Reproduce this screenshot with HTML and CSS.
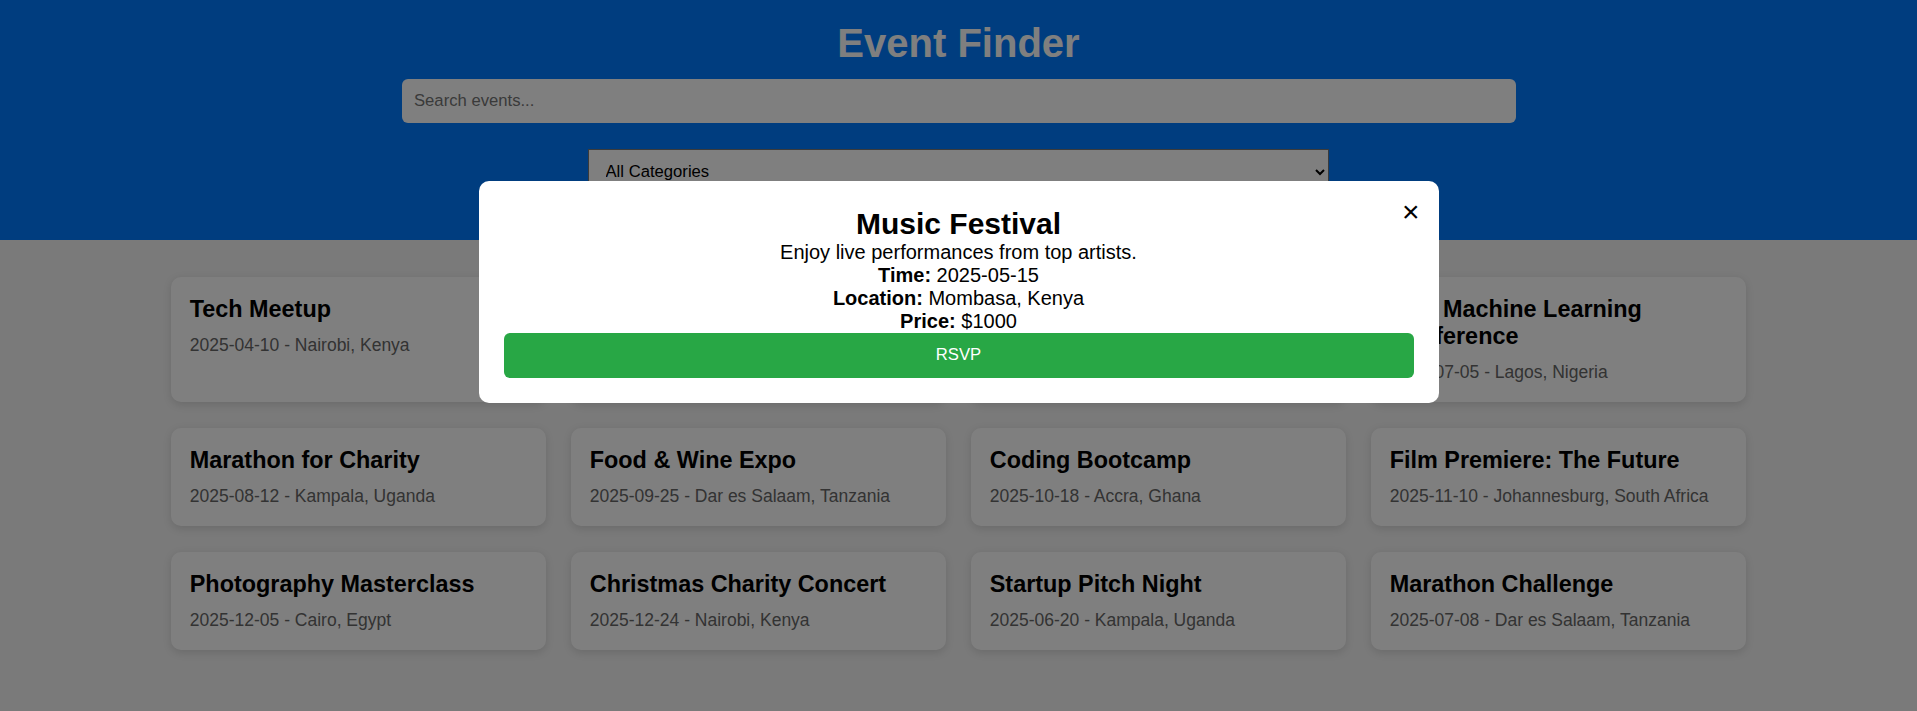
FILE: index.html
```html
<!DOCTYPE html>
<html lang="en">
<head>
<meta charset="utf-8">
<title>Event Finder</title>
<link rel="stylesheet" href="styles.css">
</head>
<body>
<header class="header">
  <h1 class="title">Event Finder</h1>
  <input class="search" type="text" placeholder="Search events...">
  <select class="category">
    <option>All Categories</option>
    <option>Music</option>
    <option>Tech</option>
    <option>Sports</option>
  </select>
</header>

<main class="events">
  <div class="card"><h3 class="card-title">Tech Meetup</h3><p class="card-meta">2025-04-10 - Nairobi, Kenya</p></div>
  <div class="card"><h3 class="card-title">Music Festival</h3><p class="card-meta">2025-05-15 - Mombasa, Kenya</p></div>
  <div class="card"><h3 class="card-title">Art Exhibition</h3><p class="card-meta">2025-06-01 - Kigali, Rwanda</p></div>
  <div class="card"><h3 class="card-title">AI &amp; Machine Learning Conference</h3><p class="card-meta">2025-07-05 - Lagos, Nigeria</p></div>
  <div class="card"><h3 class="card-title">Marathon for Charity</h3><p class="card-meta">2025-08-12 - Kampala, Uganda</p></div>
  <div class="card"><h3 class="card-title">Food &amp; Wine Expo</h3><p class="card-meta">2025-09-25 - Dar es Salaam, Tanzania</p></div>
  <div class="card"><h3 class="card-title">Coding Bootcamp</h3><p class="card-meta">2025-10-18 - Accra, Ghana</p></div>
  <div class="card"><h3 class="card-title">Film Premiere: The Future</h3><p class="card-meta">2025-11-10 - Johannesburg, South Africa</p></div>
  <div class="card"><h3 class="card-title">Photography Masterclass</h3><p class="card-meta">2025-12-05 - Cairo, Egypt</p></div>
  <div class="card"><h3 class="card-title">Christmas Charity Concert</h3><p class="card-meta">2025-12-24 - Nairobi, Kenya</p></div>
  <div class="card"><h3 class="card-title">Startup Pitch Night</h3><p class="card-meta">2025-06-20 - Kampala, Uganda</p></div>
  <div class="card"><h3 class="card-title">Marathon Challenge</h3><p class="card-meta">2025-07-08 - Dar es Salaam, Tanzania</p></div>
</main>

<div class="overlay">
  <div class="modal">
    <span class="close">×</span>
    <h2 class="modal-title">Music Festival</h2>
    <p class="modal-line">Enjoy live performances from top artists.</p>
    <p class="modal-line"><strong>Time:</strong> 2025-05-15</p>
    <p class="modal-line"><strong>Location:</strong> Mombasa, Kenya</p>
    <p class="modal-line"><strong>Price:</strong> $1000</p>
    <button class="rsvp" type="button">RSVP</button>
  </div>
</div>
</body>
</html>
```

FILE: styles.css
```css
* {
  box-sizing: border-box;
}

html, body {
  margin: 0;
  padding: 0;
}

body {
  font-family: "Liberation Sans", Arial, sans-serif;
  background: #f4f4f4;
  color: #000;
}

.header {
  background: #007bff;
  padding: 20px 0;
  height: 240px;
  display: flex;
  flex-direction: column;
  align-items: center;
}

.title {
  margin: 0 0 12.5px;
  font-size: 40px;
  font-weight: bold;
  color: #fff;
  line-height: 46px;
}

.search {
  width: 1114px;
  height: 44px;
  padding: 0 12.5px;
  border: none;
  border-radius: 6px;
  font-family: "Liberation Sans", Arial, sans-serif;
  font-size: 16.67px;
  background: #fff;
  outline: none;
}

.search::placeholder {
  color: #757575;
}

.category {
  margin-top: 26px;
  width: 741px;
  height: 46px;
  padding: 0 12.5px;
  border: 1px solid #767676;
  border-radius: 0;
  background: #fff;
  font-family: "Liberation Sans", Arial, sans-serif;
  font-size: 16.67px;
  color: #000;
}

.events {
  width: 1575px;
  margin: 0 auto;
  padding: 37px 0 40px;
  display: grid;
  grid-template-columns: repeat(4, 1fr);
  column-gap: 25px;
  row-gap: 26px;
}

.card {
  background: #fff;
  border-radius: 10px;
  padding: 18.75px;
  box-shadow: 0 2.5px 8px rgba(0, 0, 0, 0.12);
}

.card-title {
  margin: 0 0 12.5px;
  font-size: 23.4px;
  font-weight: bold;
  color: #000;
}

.card-meta {
  margin: 0;
  font-size: 17.5px;
  color: #666;
}

.overlay {
  position: fixed;
  inset: 0;
  background: rgba(0, 0, 0, 0.5);
  display: flex;
  justify-content: center;
  align-items: flex-start;
  padding-top: 181px;
}

.modal {
  position: relative;
  width: 960px;
  background: #fff;
  border-radius: 10px;
  padding: 25.5px 25px 25px;
  text-align: center;
}

.close {
  position: absolute;
  top: 16px;
  right: 19px;
  font-size: 30px;
  line-height: 30px;
  cursor: pointer;
  color: #000;
}

.modal-title {
  margin: 0;
  font-size: 30px;
  font-weight: bold;
}

.modal-line {
  margin: 0;
  font-size: 20px;
  line-height: 23px;
}

.rsvp {
  display: block;
  width: 100%;
  height: 45px;
  border: none;
  border-radius: 6px;
  background: #28a745;
  color: #fff;
  font-family: "Liberation Sans", Arial, sans-serif;
  font-size: 16.67px;
  cursor: pointer;
}
```
